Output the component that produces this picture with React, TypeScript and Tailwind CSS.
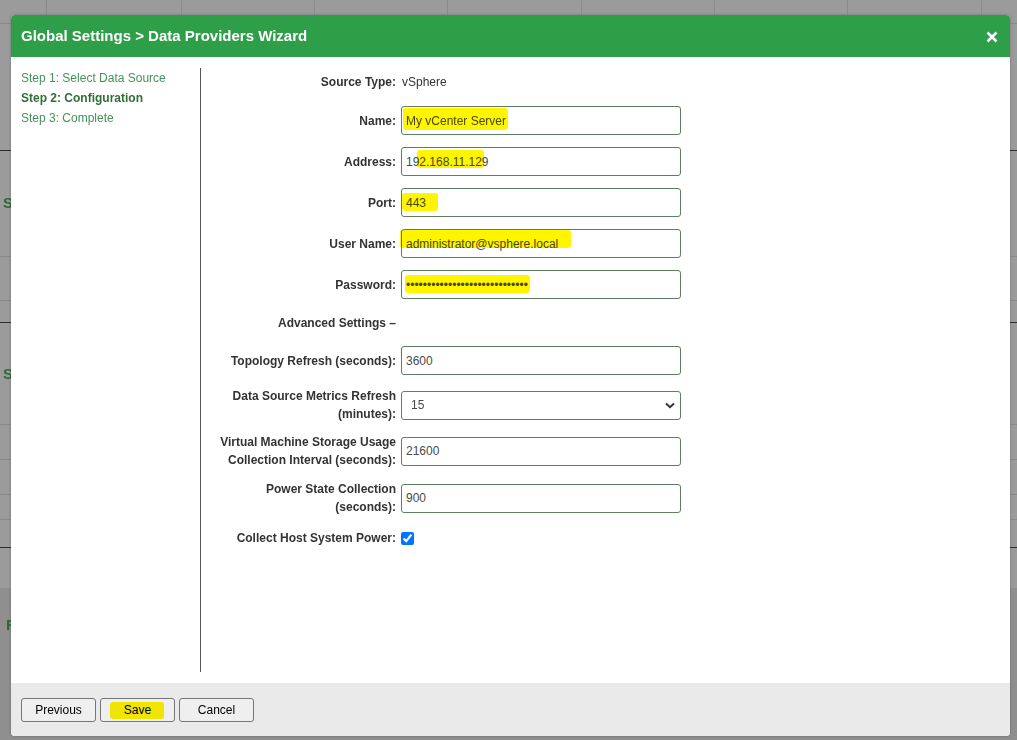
import React from "react";

const font = { fontFamily: '"Liberation Sans", Arial, sans-serif' };

function Hl({ l, t, w, h }: { l: number; t: number; w: number; h: number }) {
  return (
    <span
      className="absolute bg-[#fff500] mix-blend-multiply rounded-[3px] pointer-events-none"
      style={{ left: l, top: t, width: w, height: h }}
    />
  );
}

function Field({
  value,
  hl,
}: {
  value: string;
  hl?: { l: number; t: number; w: number; h: number };
}) {
  return (
    <div className="relative ml-[5px] w-[280px] h-[29px] shrink-0 border border-[#5f7d60] rounded-[3px] bg-white flex items-center px-[4px] text-[12px] text-[#4a4a4a] whitespace-nowrap">
      <span>{value}</span>
      {hl && <Hl {...hl} />}
    </div>
  );
}

function Label({ children }: { children: React.ReactNode }) {
  return (
    <div className="w-[195px] shrink-0 text-right font-bold text-[12px] leading-[18px] text-[#333] whitespace-nowrap">
      {children}
    </div>
  );
}

function BgCells() {
  const widths = [47, 135, 133, 133, 134, 133, 133, 134];
  return (
    <div className="h-[24px] flex border-b border-[#8a8a8a]">
      {widths.map((w, i) => (
        <div key={i} className="h-full border-r border-[#8a8a8a] shrink-0" style={{ width: w }} />
      ))}
      <div className="flex-1" />
    </div>
  );
}

export default function App() {
  return (
    <div className="relative w-[1017px] h-[740px] overflow-hidden bg-[#9b9b9b]" style={font}>
      {/* page behind the overlay */}
      <div className="flex flex-col">
        <BgCells />
        <div className="h-[127px] border-b border-[#2e2e2e]" />
        <div className="h-[106px] border-b border-[#8a8a8a] pl-[3px] pt-[43px] text-[15px] font-bold text-[#2d6a37] leading-[18px]">S</div>
        <div className="h-[44px] border-b border-[#8a8a8a]" />
        <div className="h-[22px] border-b border-[#2e2e2e]" />
        <div className="h-[102px] border-b border-[#8a8a8a] pl-[3px] pt-[42px] text-[15px] font-bold text-[#2d6a37] leading-[18px]">S</div>
        <div className="h-[35px] border-b border-[#8a8a8a]" />
        <div className="h-[35px] border-b border-[#8a8a8a]" />
        <div className="h-[25px] border-b border-[#8a8a8a]" />
        <div className="h-[28px] border-b border-[#2e2e2e]" />
        <div className="h-[40px]" />
        <div className="h-[160px] bg-[#8f8f8f] pl-[6px] pt-[28px] text-[15px] font-bold text-[#2d6a37] leading-[18px]">F</div>
      </div>

      {/* modal */}
      <div className="absolute left-[11px] top-[15px] w-[999px] h-[721px] rounded-[4px] overflow-hidden bg-white flex flex-col shadow-[0_0_3px_rgba(0,0,0,0.25)]">
        <div className="h-[42px] shrink-0 bg-[#2f9e49] flex items-center justify-between pl-[10px] pr-[12px] pt-[1px]">
          <div className="text-white font-bold text-[15px]">Global Settings &gt; Data Providers Wizard</div>
          <svg width="12" height="12" viewBox="0 0 12 12">
            <path d="M1.5 1.5 L10.5 10.5 M10.5 1.5 L1.5 10.5" stroke="white" strokeWidth="2.6" strokeLinecap="butt" />
          </svg>
        </div>

        <div className="flex-1 flex py-[11px]">
          <div className="w-[189px] shrink-0 pl-[10px] text-[12px] leading-[20px]">
            <div className="text-[#45915a]">Step 1: Select Data Source</div>
            <div className="text-[#2e7038] font-bold">Step 2: Configuration</div>
            <div className="text-[#45915a]">Step 3: Complete</div>
          </div>
          <div className="flex-1 border-l border-[#555] flex flex-col pt-[5px]">
            <div className="flex items-center h-[18px]">
              <Label>Source Type:</Label>
              <span className="ml-[6px] text-[12px] text-[#333]">vSphere</span>
            </div>
            <div className="flex items-center mt-[15px]">
              <Label>Name:</Label>
              <Field value="My vCenter Server" hl={{ l: 1, t: 1, w: 105, h: 22 }} />
            </div>
            <div className="flex items-center mt-[12px]">
              <Label>Address:</Label>
              <Field value="192.168.11.129" hl={{ l: 15, t: 2, w: 67, h: 18 }} />
            </div>
            <div className="flex items-center mt-[12px]">
              <Label>Port:</Label>
              <Field value="443" hl={{ l: 0, t: 4, w: 36, h: 18 }} />
            </div>
            <div className="flex items-center mt-[12px]">
              <Label>User Name:</Label>
              <Field value="administrator@vsphere.local" hl={{ l: -2, t: 0, w: 171, h: 18 }} />
            </div>
            <div className="flex items-center mt-[12px]">
              <Label>Password:</Label>
              <Field value={"\u2022".repeat(29)} hl={{ l: 3, t: 4, w: 125, h: 18 }} />
            </div>
            <div className="flex items-center h-[18px] mt-[15px]">
              <Label>Advanced Settings &ndash;</Label>
            </div>
            <div className="flex items-center mt-[14px]">
              <Label>Topology Refresh (seconds):</Label>
              <Field value="3600" />
            </div>
            <div className="flex items-center h-[36px] mt-[12px]">
              <Label>
                Data Source Metrics Refresh
                <br />
                (minutes):
              </Label>
              <div className="ml-[5px] w-[280px] h-[29px] shrink-0 border border-[#5f7d60] rounded-[3px] bg-white flex items-center justify-between pl-[9px] pr-[5px] text-[12px] text-[#4a4a4a]">
                <span>15</span>
                <svg width="10" height="7" viewBox="0 0 10 7">
                  <path d="M1 1.5 L5 5.2 L9 1.5" stroke="#333" strokeWidth="2" fill="none" />
                </svg>
              </div>
            </div>
            <div className="flex items-center h-[36px] mt-[10px]">
              <Label>
                Virtual Machine Storage Usage
                <br />
                Collection Interval (seconds):
              </Label>
              <Field value="21600" />
            </div>
            <div className="flex items-center h-[36px] mt-[11px]">
              <Label>
                Power State Collection
                <br />
                (seconds):
              </Label>
              <Field value="900" />
            </div>
            <div className="flex items-center h-[18px] mt-[13px]">
              <Label>Collect Host System Power:</Label>
              <input type="checkbox" defaultChecked className="m-0 ml-[5px] w-[13px] h-[13px] accent-[#0075ff]" />
            </div>
          </div>
        </div>

        <div className="h-[53px] shrink-0 bg-[#eaeaea] flex items-start gap-[4px] pl-[10px] pt-[15px]">
          <button className="w-[75px] h-[24px] border border-[#767676] rounded-[3px] bg-[#efefef] text-[12px] text-black">Previous</button>
          <button className="relative w-[75px] h-[24px] border border-[#767676] rounded-[3px] bg-[#efefef] text-[12px] text-black">
            Save
            <Hl l={9} t={3} w={54} h={17} />
          </button>
          <button className="w-[75px] h-[24px] border border-[#767676] rounded-[3px] bg-[#efefef] text-[12px] text-black">Cancel</button>
        </div>
      </div>
    </div>
  );
}
